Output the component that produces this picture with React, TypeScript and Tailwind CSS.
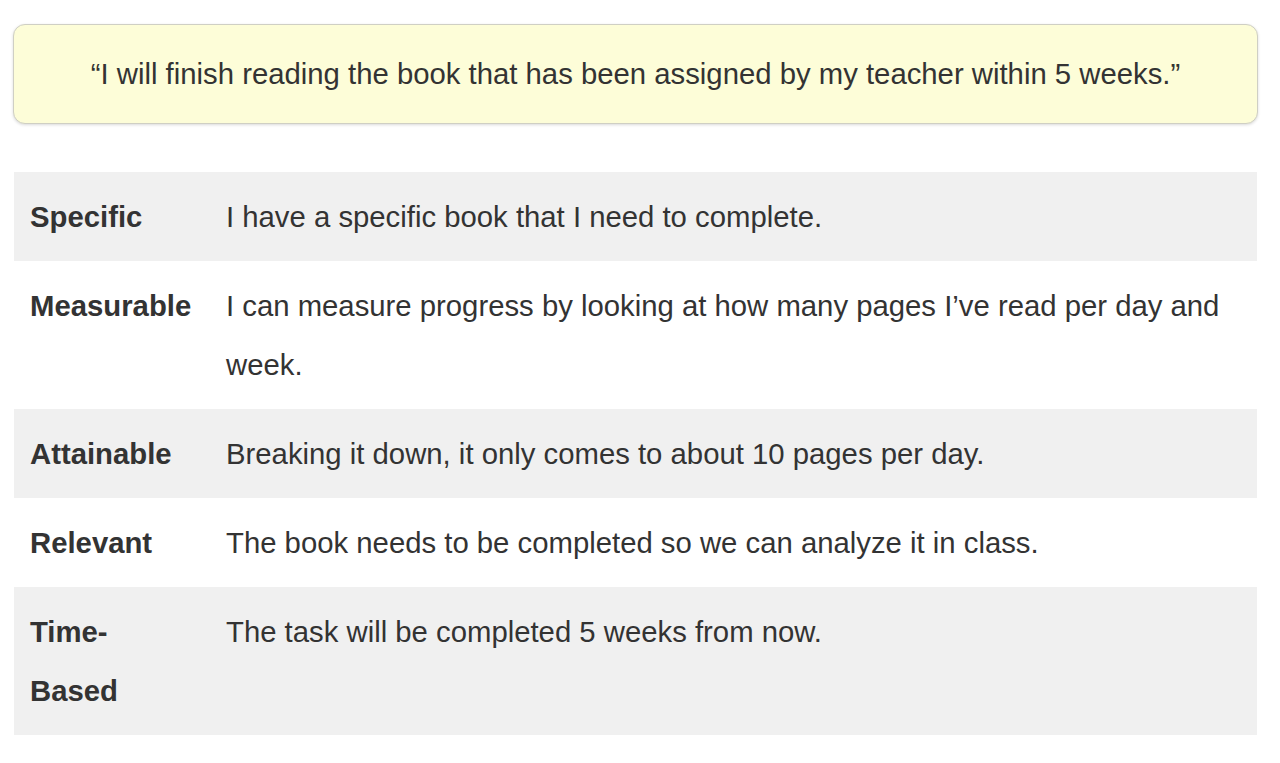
const rows = [
  { label: "Specific", text: "I have a specific book that I need to complete." },
  {
    label: "Measurable",
    text: "I can measure progress by looking at how many pages I’ve read per day and week.",
  },
  { label: "Attainable", text: "Breaking it down, it only comes to about 10 pages per day." },
  { label: "Relevant", text: "The book needs to be completed so we can analyze it in class." },
  { label: "Time-Based", text: "The task will be completed 5 weeks from now." },
];

export default function App() {
  return (
    <div className="min-h-screen bg-white pt-6 pl-[13px] pr-[22px] font-['Liberation_Sans',Arial,sans-serif] text-[#333333]">
      <div className="rounded-xl border border-[#cfcfc4] bg-[#fdfdd8] py-5 text-center text-[29.3px] leading-[58px] shadow-[0_1px_3px_rgba(0,0,0,0.15)]">
        “I will finish reading the book that has been assigned by my teacher within 5 weeks.”
      </div>

      <div className="mt-12 ml-px mr-px">
        {rows.map((row, i) => (
          <div
            key={row.label}
            className={`flex py-[15px] text-[29.3px] leading-[59px] ${i % 2 === 0 ? "bg-[#f0f0f0]" : "bg-white"}`}
          >
            <div className="w-[212px] shrink-0 pl-4 pr-[33px] font-bold">{row.label}</div>
            <div className="flex-1 pr-4">{row.text}</div>
          </div>
        ))}
      </div>
    </div>
  );
}
